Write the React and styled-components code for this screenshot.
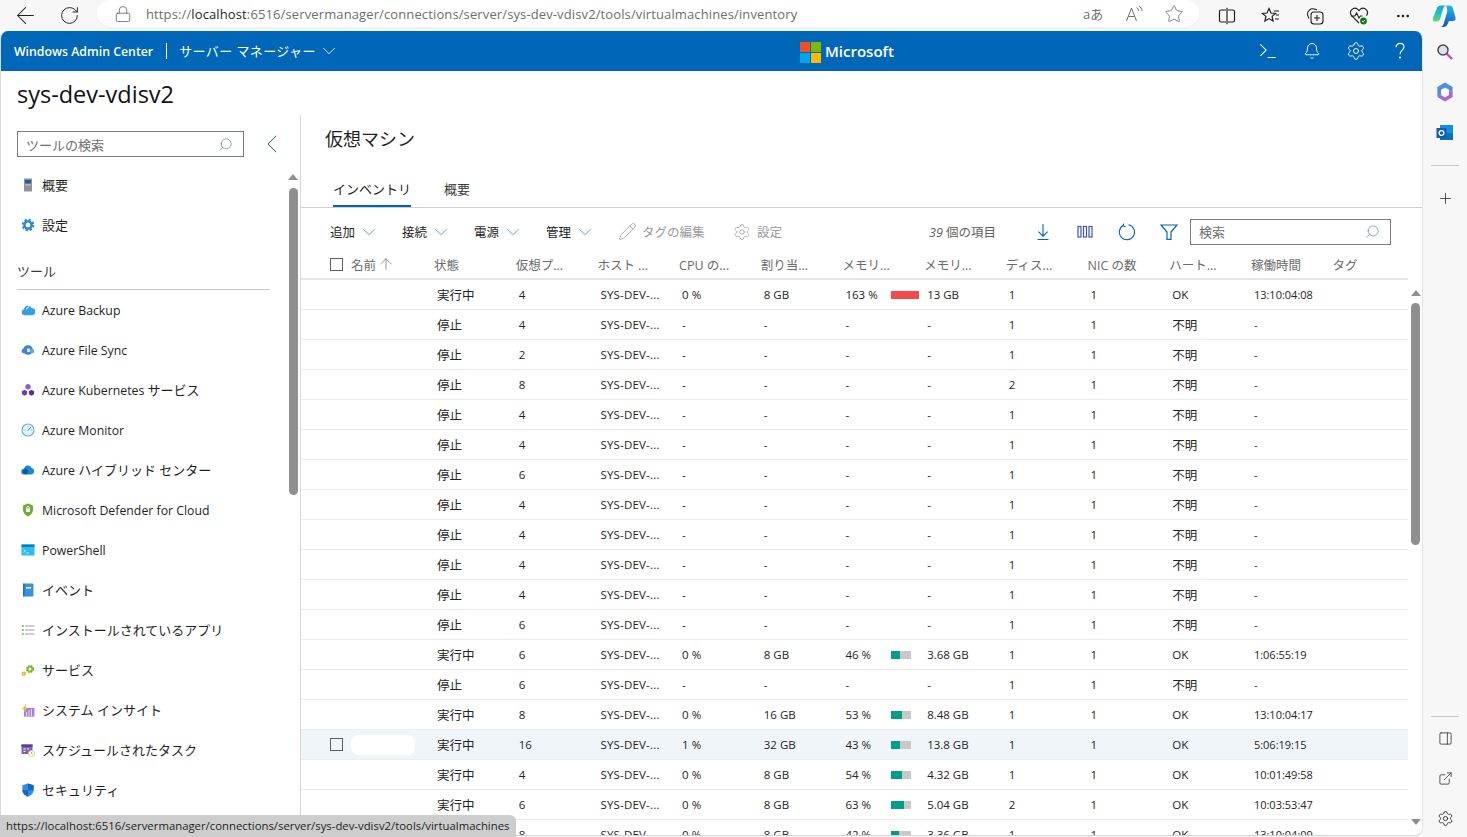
import React from 'react';
import styled, { createGlobalStyle } from 'styled-components';
import {
  ArrowLeft, ArrowUp, Bell, ChevronDown, ChevronLeft, Ellipsis, ExternalLink, Lock,
  PanelRight, Pencil, Plus, RotateCw, Search, Settings, Star, Terminal,
} from 'lucide-react';

const FONT = '"Open Sans", "Noto Sans CJK JP", sans-serif';

const GlobalStyle = createGlobalStyle`
  html, body { margin: 0; padding: 0; height: 100%; }
  body { font-family: ${FONT}; color: #212121; background: #f7f7f7; }
  * { box-sizing: border-box; }
`;

const Window = styled.div`
  position: relative;
  display: flex;
  flex-direction: column;
  height: 100vh;
  overflow: hidden;
  background: #f7f7f7;
`;

/* browser chrome */
const BrowserBar = styled.div`
  display: flex;
  align-items: center;
  height: 31px;
  flex: none;
  padding-left: 14px;
`;

const ChromeButton = styled.span`
  display: flex;
  align-items: center;
  justify-content: center;
  flex: none;
  width: 22px;
  height: 22px;
  margin-right: ${(p) => p.$gap || 0}px;
  color: ${(p) => p.$color || '#1f1f1f'};
  svg { flex: none; }
`;

const AddressBar = styled.div`
  display: flex;
  align-items: center;
  flex: none;
  width: 1102px;
  height: 27px;
  margin: -4px 17px 0 0;
  padding: 0 14px 0 17px;
  background: #fff;
  border-radius: 14px;
  box-shadow: 0 1px 1px rgba(0, 0, 0, 0.05);
`;

const Url = styled.div`
  flex: 1;
  margin-left: 14px;
  font-size: 13px;
  letter-spacing: 0.12px;
  color: #6e6e6e;
  white-space: nowrap;
  b { font-weight: 400; color: #1f1f1f; }
`;

const ReadGlyph = styled.span`
  flex: none;
  width: 40px;
  font-size: 13px;
  color: #6e6e6e;
`;

const Body = styled.div`
  display: flex;
  flex: 1;
  min-height: 0;
`;

const Page = styled.div`
  display: flex;
  flex-direction: column;
  flex: none;
  width: 1423px;
  margin-bottom: 1px;
  background: #fff;
  border-left: 1px solid #d9d9d9;
  border-right: 1px solid #e3e3e3;
  border-bottom: 1px solid #d4d4d4;
  border-radius: 8px 8px 8px 0;
  overflow: hidden;
`;

/* edge sidebar */
const EdgeSide = styled.aside`
  display: flex;
  flex-direction: column;
  align-items: center;
  flex: 1;
  padding-top: 1px;
  margin-bottom: -1px;
`;

const EdgeSlot = styled.span`
  display: flex;
  align-items: center;
  justify-content: center;
  flex: none;
  width: 28px;
  height: ${(p) => p.$h || 40}px;
  color: #262626;
`;

const EdgeRule = styled.div`
  flex: none;
  width: 28px;
  height: 1px;
  margin: ${(p) => p.$m || '12px 0'};
  background: #c8c8c8;
`;

const EdgeSpacer = styled.div`
  flex: 1;
`;

/* app header */
const AppHeader = styled.header`
  display: flex;
  align-items: center;
  position: relative;
  flex: none;
  height: 40px;
  padding-left: 13px;
  background: #0067b8;
  color: #fff;
`;

const Brand = styled.span`
  font-size: 12.3px;
  font-weight: 600;
`;

const HeadDivider = styled.span`
  width: 1px;
  height: 16px;
  margin: 0 12px 0 13px;
  background: #fff;
`;

const ManagerMenu = styled.span`
  display: flex;
  align-items: center;
  gap: 2px;
  padding-bottom: 1px;
  font-size: 13px;
  letter-spacing: 0.4px;
`;

const MsLogo = styled.span`
  position: absolute;
  left: 799px;
  top: 10px;
  display: flex;
  align-items: center;
  gap: 4px;
  font-size: 15px;
  font-weight: 600;
`;

const MsWord = styled.span`
  padding-bottom: 2px;
`;

const LogoGrid = styled.svg`
  width: 21px;
  height: 21px;
`;

const HeadIcons = styled.div`
  display: flex;
  align-items: center;
  margin-left: auto;
`;

const HeadIcon = styled.span`
  display: flex;
  align-items: center;
  justify-content: center;
  width: 44px;
  height: 40px;
`;

const ServerTitle = styled.h1`
  flex: none;
  height: 44px;
  margin: 0;
  padding: 6px 0 0 16px;
  font-size: 23.5px;
  line-height: 34px;
  font-weight: 400;
  color: #111;
`;

const Columns = styled.div`
  display: flex;
  flex: 1;
  min-height: 0;
`;

/* tool sidebar */
const Side = styled.nav`
  display: flex;
  flex-direction: column;
  flex: none;
  width: 300px;
  border-right: 1px solid #d6d6d6;
`;

const SideSearchRow = styled.div`
  display: flex;
  align-items: center;
  flex: none;
  height: 50px;
  padding: 16px 0 8px 16px;
`;

const SearchBox = styled.div`
  display: flex;
  align-items: center;
  justify-content: space-between;
  flex: none;
  width: ${(p) => p.$w}px;
  height: 26px;
  padding: 0 10px 0 8px;
  border: 1px solid #7a7a7a;
  font-size: 13px;
  color: #6e6e6e;
`;

const FlipSearch = styled(Search)`
  transform: scaleX(-1);
  color: #5b7fae;
`;

const Collapse = styled.span`
  display: flex;
  margin-left: 12px;
  color: #0067b8;
`;

const NavArea = styled.div`
  display: flex;
  flex: 1;
  min-height: 0;
`;

const NavList = styled.div`
  flex: none;
  width: 286px;
  overflow: hidden;
`;

const NavItem = styled.div`
  display: flex;
  align-items: center;
  height: 40px;
  padding-left: 20px;
  font-size: 12.3px;
  color: #1f1f1f;
  white-space: nowrap;
`;

const Jp = styled.span`
  display: inline-block;
  padding-bottom: 2px;
  font-size: 13px;
`;

const NavIconSlot = styled.span`
  display: flex;
  align-items: center;
  justify-content: center;
  flex: none;
  width: 14px;
  height: 14px;
  margin-right: 7px;
`;

const NavHeading = styled.div`
  height: 45px;
  margin: 0 17px 0 16px;
  padding-top: 17px;
  font-size: 13px;
  line-height: 18px;
  color: #3a3a3a;
  border-bottom: 1px solid #c8c8c8;
`;

const ScrollRail = styled.div`
  display: flex;
  flex-direction: column;
  align-items: center;
  flex: none;
  width: ${(p) => p.$w || 12}px;
  padding-top: ${(p) => p.$top || 0}px;
`;

const ArrowUpTip = styled.span`
  flex: none;
  width: 0;
  height: 0;
  border-left: 5px solid transparent;
  border-right: 5px solid transparent;
  border-bottom: 6px solid #8f8f8f;
`;

const ArrowDownTip = styled(ArrowUpTip)`
  margin-top: auto;
  margin-bottom: 10px;
  border-bottom: 0;
  border-top: 6px solid #8f8f8f;
`;

const Thumb = styled.span`
  flex: none;
  width: 9px;
  height: ${(p) => p.$h}px;
  margin-top: ${(p) => p.$mt}px;
  background: #8f8f8f;
  border-radius: 5px;
`;

/* main */
const Main = styled.main`
  display: flex;
  flex-direction: column;
  flex: 1;
  min-width: 0;
`;

const PageTitle = styled.h2`
  flex: none;
  height: 50px;
  margin: 0;
  padding: 11px 0 0 24px;
  font-size: 18px;
  line-height: 26px;
  font-weight: 400;
  color: #1f1f1f;
`;

const Tabs = styled.div`
  display: flex;
  flex: none;
  gap: 33px;
  height: 43px;
  padding-left: 32px;
  border-bottom: 1px solid #cfcfcf;
`;

const Tab = styled.span`
  height: 42px;
  padding-top: 15px;
  font-size: 13px;
  line-height: 18px;
  color: ${(p) => (p.$active ? '#1f1f1f' : '#3a3a3a')};
  border-bottom: ${(p) => (p.$active ? '2px solid #0067b8' : '0')};
`;

const Toolbar = styled.div`
  display: flex;
  align-items: center;
  flex: none;
  height: 44px;
  padding: 3px 32px 0 29px;
`;

const MenuButton = styled.span`
  display: flex;
  align-items: center;
  flex: none;
  width: 72px;
  gap: 3px;
  font-size: 12.5px;
  color: #1f1f1f;
  svg { color: #5b7fae; }
`;

const DisabledButton = styled.span`
  display: flex;
  align-items: center;
  flex: none;
  width: ${(p) => p.$w}px;
  gap: ${(p) => p.$gap}px;
  font-size: 12.5px;
  color: #9a9a9a;
`;

const ItemCount = styled.span`
  margin-left: 136px;
  width: 93px;
  flex: none;
  font-size: 12.5px;
  color: #5f5f5f;
  i { font-style: italic; }
`;

const ToolIcon = styled.span`
  display: flex;
  justify-content: center;
  flex: none;
  width: 42px;
  color: #0067b8;
`;

const TableWrap = styled.div`
  display: flex;
  flex: 1;
  min-height: 0;
`;

const Table = styled.div`
  flex: none;
  width: 1107px;
  overflow: hidden;
`;

const RowGrid = styled.div`
  display: grid;
  grid-template-columns: 128px repeat(11, 81.7px) 1fr;
  align-items: center;
`;

const HeadRow = styled(RowGrid)`
  height: 28px;
  padding-bottom: 2px;
  border-bottom: 2px solid #e6e6e6;
`;

const HeadCell = styled.span`
  padding-left: 5px;
  font-size: 12.5px;
  color: #6a6a6a;
  white-space: nowrap;
`;

const NameCell = styled.span`
  display: flex;
  align-items: center;
  padding-left: 29px;
  height: 100%;
  font-size: 12.5px;
  color: #6a6a6a;
  svg { flex: none; margin-left: 1px; }
`;

const CheckBox = styled.span`
  flex: none;
  width: 13px;
  height: 13px;
  margin-right: 8px;
  border: 1px solid #5f5f5f;
`;

const Row = styled(RowGrid)`
  height: 30px;
  border-bottom: 1px solid #ececec;
  background: ${(p) => (p.$hover ? '#f0f5f9' : '#fff')};
`;

const Cell = styled.span`
  padding-left: 8px;
  font-size: ${(p) => (p.$jp ? 12.5 : p.$time ? 11 : 11.5)}px;
  color: #242424;
  white-space: nowrap;
`;

const HostCell = styled(Cell)`
  letter-spacing: 0.2px;
`;

const MemoryCell = styled(Cell)`
  display: grid;
  grid-template-columns: 45.5px auto;
  align-items: center;
`;

const Track = styled.span`
  display: block;
  width: ${(p) => (p.$over ? 28 : 20)}px;
  height: 8px;
  background: #c8c8c8;
`;

const Fill = styled.span`
  display: block;
  height: 100%;
  background: ${(p) => (p.$over ? '#f34b4b' : '#00a088')};
`;

const HiddenName = styled.span`
  width: 64px;
  height: 20px;
  background: #fff;
  border-radius: 8px;
`;

const StatusTip = styled.div`
  position: absolute;
  left: 0;
  bottom: 0;
  width: 516px;
  height: 22px;
  padding: 3px 0 0 6px;
  background: #cdcdcd;
  border-top-right-radius: 6px;
  font-size: 11.35px;
  line-height: 16px;
  color: #1f1f1f;
  white-space: nowrap;
`;

/* coloured drawings */
const Svg = ({ children, size = 14 }) => (
  <svg width={size} height={size} viewBox="0 0 14 14">{children}</svg>
);

const ServerIcon = () => (
  <Svg><rect x="3" y="0.5" width="8" height="13" fill="#8f9499" /><rect x="4" y="2" width="6" height="3.4" fill="#1e5f9e" /><rect x="4" y="6.4" width="6" height="1" fill="#c8c8c8" /></Svg>
);
const GearIcon = () => (
  <Svg>
    <circle cx="7" cy="7" r="4.6" fill="none" stroke="#2b88d8" strokeWidth="3.4" strokeDasharray="2 1.6" />
    <circle cx="7" cy="7" r="3.6" fill="none" stroke="#2b88d8" strokeWidth="2.4" />
  </Svg>
);
const BackupIcon = () => (
  <Svg><path d="M3.4 12.2A3 3 0 0 1 3 6.3 4 4 0 0 1 10.6 5a3.6 3.6 0 0 1 .2 7.2z" fill="#2ea3dd" /><path d="M5 6.2 8.4 3.2" stroke="#fff" strokeWidth="1" /></Svg>
);
const SyncIcon = () => (
  <Svg><circle cx="7" cy="7" r="4.8" fill="#3a86d0" /><circle cx="2.8" cy="8" r="2.2" fill="#3a86d0" /><circle cx="11.2" cy="8" r="2.2" fill="#6fa8d8" /><rect x="6" y="5.5" width="3" height="3.5" fill="#cfe2f3" /></Svg>
);
const KubeIcon = () => (
  <Svg><polygon points="7,0.8 9.6,2.3 9.6,5.3 7,6.8 4.4,5.3 4.4,2.3" fill="#8a5fd0" /><polygon points="3.5,6.8 6.1,8.3 6.1,11.3 3.5,12.8 0.9,11.3 0.9,8.3" fill="#6b3fb5" /><polygon points="10.5,6.8 13.1,8.3 13.1,11.3 10.5,12.8 7.9,11.3 7.9,8.3" fill="#5a2fa0" /></Svg>
);
const MonitorIcon = () => (
  <Svg><circle cx="7" cy="7" r="6" fill="#e6f3fc" stroke="#68b5e8" strokeWidth="1.2" /><path d="M7 7.5 9.8 4.2" stroke="#3d7fc0" strokeWidth="1" /><path d="M3 7h1.5M9.5 7H11M7 3v1" stroke="#7fb8e0" strokeWidth="0.8" /></Svg>
);
const HybridIcon = () => (
  <Svg><path d="M3.2 11.6A2.9 2.9 0 0 1 3 5.8 4 4 0 0 1 10.6 5a3.4 3.4 0 0 1 .2 6.6z" fill="#1f87cf" /><polygon points="4.6,5.8 7,7 7,10.2 4.6,11.4 2.2,10.2 2.2,7" fill="#0b5a94" /></Svg>
);
const DefenderIcon = () => (
  <Svg><path d="M7 .6 12 2.4v4.4c0 3.2-2.2 5.4-5 6.6-2.8-1.2-5-3.4-5-6.6V2.4z" fill="#6fae2e" /><rect x="5" y="5.6" width="4" height="3.4" fill="#fff" /><path d="M5.8 5.8V4.6a1.2 1.2 0 0 1 2.4 0v1.2" fill="none" stroke="#fff" /></Svg>
);
const ShellIcon = () => (
  <Svg><rect x="0.5" y="1.5" width="13" height="11" fill="#2cbcf0" /><rect x="0.5" y="1.5" width="13" height="2.4" fill="#0f78b8" /><path d="M2.5 6.5 4.5 8 2.5 9.5M5 10h3" stroke="#fff" strokeWidth="0.7" fill="none" /></Svg>
);
const EventIcon = () => (
  <Svg><rect x="2" y="0.6" width="10.5" height="12.8" rx="1" fill="#3a8fe0" /><rect x="2" y="0.6" width="1.6" height="12.8" fill="#1f6fc0" /><rect x="5" y="4" width="5" height="1.5" fill="#fff" /></Svg>
);
const AppsIcon = () => (
  <Svg><path d="M0.8 3h2M0.8 7h2M0.8 11h2" stroke="#6fae2e" strokeWidth="1.4" /><path d="M4 3h9.4M4 7h9.4M4 11h9.4" stroke="#9a9a9a" strokeWidth="1.2" /></Svg>
);
const ServiceIcon = () => (
  <Svg>
    <circle cx="9" cy="6" r="2.9" fill="none" stroke="#7ab82e" strokeWidth="2.4" strokeDasharray="1.6 .7" />
    <circle cx="9" cy="6" r="2.4" fill="none" stroke="#7ab82e" strokeWidth="1.4" />
    <circle cx="2.8" cy="10.6" r="1.5" fill="#fff" stroke="#f5a81c" strokeWidth="1.4" />
  </Svg>
);
const InsightIcon = () => (
  <Svg><rect x="3" y="5" width="10.4" height="8.6" fill="#a57de0" /><path d="M5.5 13V9M8 13V7M10.5 13V6" stroke="#e6dcf6" strokeWidth="1" /><polygon points="5.2,0.4 1,6.6 3.6,6.6 2.6,10 6.6,4.4 4.2,4.4" fill="#f5b71c" /></Svg>
);
const TaskIcon = () => (
  <Svg><rect x="0.5" y="1.5" width="11" height="9.5" fill="#7b63b8" /><rect x="0.5" y="1.5" width="11" height="2.4" fill="#54408f" /><path d="M2.5 6h2M6 6h2M2.5 8.4h2" stroke="#fff" /><circle cx="10.5" cy="10.5" r="3" fill="#fff" stroke="#e8c46a" /><path d="M10.5 9v1.7h1.2" stroke="#b08a2e" strokeWidth="0.7" fill="none" /></Svg>
);
const ShieldIcon = () => (
  <Svg><path d="M7 .4 12.6 2.2v5c0 3-2.6 5.2-5.6 6.4C4 12.4 1.4 10.2 1.4 7.2v-5z" fill="#2f8fe6" /><path d="M7 .4 12.6 2.2v5H7zM7 7.2v6.4C4 12.4 1.4 10.2 1.4 7.2z" fill="#1168c4" /></Svg>
);

const HelpGlyph = () => (
  <svg width="18" height="18" viewBox="0 0 18 18" fill="none" stroke="#fff" strokeWidth="1.1">
    <path d="M5 5.2C5 3 6.8 1.4 9 1.4s4 1.5 4 3.6c0 3-4 3.4-4 7.2" />
    <circle cx="9" cy="15.6" r=".5" fill="#fff" />
  </svg>
);

const DownloadGlyph = () => (
  <svg width="16" height="18" viewBox="0 0 16 18" fill="none" stroke="currentColor" strokeWidth="1.1">
    <path d="M8 1v12M3.4 8.6 8 13.2l4.6-4.6M2.5 16.5h11" />
  </svg>
);

const ColumnsGlyph = () => (
  <svg width="16" height="14" viewBox="0 0 16 14" fill="none" stroke="#3f55c0" strokeWidth="1.2">
    <rect x="1" y="1.5" width="3" height="10.5" /><rect x="6.5" y="1.5" width="3" height="10.5" /><rect x="12" y="1.5" width="3" height="10.5" />
  </svg>
);

const RefreshGlyph = () => (
  <svg width="18" height="18" viewBox="0 0 18 18" fill="none" stroke="currentColor" strokeWidth="1.1">
    <path d="M10.5 1.7A7.6 7.6 0 1 1 5.2 2.5" />
    <path d="M5.6.6 5.2 3l2.4.8" />
  </svg>
);

const FunnelGlyph = () => (
  <svg width="18" height="18" viewBox="0 0 18 18" fill="none" stroke="currentColor" strokeWidth="1.2">
    <path d="M1 2h16l-6 7v7.4H7V9z" />
  </svg>
);

const CopilotMark = () => (
  <svg width="24" height="24" viewBox="0 0 24 24">
    <defs>
      <linearGradient id="copA" x1="0.4" y1="0" x2="0.4" y2="1">
        <stop offset="0" stopColor="#1f9fe0" />
        <stop offset="0.55" stopColor="#24c8b0" />
        <stop offset="1" stopColor="#6fd66a" />
      </linearGradient>
      <linearGradient id="copB" x1="0.6" y1="0" x2="0.4" y2="1">
        <stop offset="0" stopColor="#18c0d8" />
        <stop offset="0.5" stopColor="#1f7fe0" />
        <stop offset="1" stopColor="#1a4fc8" />
      </linearGradient>
    </defs>
    <path d="M9 1.5h5c-1.5.5-2.5 1.5-3 3.5L8.5 14c-.5 2-2 3.5-4 3.5H3C1 17.5.3 16 1 14L5 4C5.6 2.4 7 1.5 9 1.5z" fill="url(#copA)" />
    <path d="M14 1.5h3.5c2 0 3 1 3.5 3l2.5 9c.5 2-.5 3.5-2.5 3.5H17l-1.6 3.5c-.8 1.6-2 2.5-3.9 2.5H8c2 0 3-1.2 3.6-3L15 8.5c.5-1.5.2-5.5-1-7z" fill="url(#copB)" />
  </svg>
);
const SplitMark = () => (
  <svg width="18" height="18" viewBox="0 0 18 18" fill="none" stroke="#1f1f1f" strokeWidth="1.2">
    <path d="M8 3H3a1.5 1.5 0 0 0-1.5 1.5v9A1.5 1.5 0 0 0 3 15h5M10 3h5a1.5 1.5 0 0 1 1.5 1.5v9A1.5 1.5 0 0 1 15 15h-5M9 .8v16.4" />
  </svg>
);
const CollectionsMark = () => (
  <svg width="18" height="18" viewBox="0 0 18 18" fill="none" stroke="#1f1f1f" strokeWidth="1.1">
    <path d="M3 11.5C1.8 9.5 1 7.5 1.8 5L4 2.6c.8-.8 2-1 3-.8l4 1" />
    <rect x="5" y="5" width="12" height="12" rx="3" />
    <path d="M11 8v6M8 11h6" />
  </svg>
);
const M365Mark = () => (
  <svg width="18" height="20" viewBox="0 0 18 20">
    <path d="M9 .6 16.6 5v5l-4-2.4L9 5.4 5 7.8V13L1.4 15V5z" fill="#4a8fe0" />
    <path d="M16.6 10v5L9 19.4 1.4 15 5 13l4 2.4 4-2.4V8z" fill="#a468d8" />
    <circle cx="9" cy="10" r="3" fill="#fff" />
  </svg>
);
const OutlookMark = () => (
  <svg width="18" height="18" viewBox="0 0 18 18">
    <rect x="4" y="1" width="13" height="15" fill="#1490df" />
    <path d="M4 9h13v7H4z" fill="#0a6fc2" />
    <rect x="0.5" y="4" width="10" height="10" fill="#0f5fb0" />
    <circle cx="5.5" cy="9" r="2.4" fill="none" stroke="#fff" strokeWidth="1.3" />
  </svg>
);
const ZoomMark = () => (
  <svg width="18" height="18" viewBox="0 0 18 18">
    <path d="M10.5 10.5 16 16" stroke="#d040c8" strokeWidth="2.4" />
    <circle cx="7" cy="7" r="5" fill="#dbe4ee" stroke="#4a4a4a" strokeWidth="1.5" />
  </svg>
);
const HealthMark = () => (
  <svg width="22" height="22" viewBox="0 0 22 22" fill="none" stroke="#1f1f1f" strokeWidth="1.1">
    <path d="M11 18 3.6 10.6a4.4 4.4 0 0 1 6.2-6.2L11 5.6l1.2-1.2a4.4 4.4 0 0 1 6.2 6.2" />
    <path d="M3 11h4l1.6-3 2.4 5 1.4-2h2" />
    <circle cx="15.5" cy="16" r="3.4" fill="#107c10" stroke="none" />
    <path d="M14 16l1.1 1.1 2-2.2" stroke="#fff" strokeWidth="0.9" />
  </svg>
);
const FavMark = () => (
  <svg width="20" height="20" viewBox="0 0 20 20" fill="none" stroke="#1f1f1f" strokeWidth="1.2">
    <path d="M8 2.5 10 7l4.6.4-3.5 3 1 4.6L8 12.6 3.9 15l1-4.6-3.5-3L6 7z" />
    <path d="M13 5h5M15 9h3M14 13h4" />
  </svg>
);
const ReadAloud = () => (
  <svg width="20" height="20" viewBox="0 0 20 20" fill="none" stroke="#6e6e6e" strokeWidth="1">
    <path d="M2.5 17 7.5 4l5 13M4.4 12.5h6.2" />
    <path d="M12.5 3.5c1.4.8 2 2 2 3.2M15 2c2 1 3 3 3 5" />
  </svg>
);

const NAV_TOP = [
  [<Jp>概要</Jp>, ServerIcon],
  [<Jp>設定</Jp>, GearIcon],
];

const NAV_TOOLS = [
  ['Azure Backup', BackupIcon],
  ['Azure File Sync', SyncIcon],
  [<>Azure Kubernetes <Jp>サービス</Jp></>, KubeIcon],
  ['Azure Monitor', MonitorIcon],
  [<>Azure <Jp>ハイブリッド センター</Jp></>, HybridIcon],
  ['Microsoft Defender for Cloud', DefenderIcon],
  ['PowerShell', ShellIcon],
  [<Jp>イベント</Jp>, EventIcon],
  [<Jp>インストールされているアプリ</Jp>, AppsIcon],
  [<Jp>サービス</Jp>, ServiceIcon],
  [<Jp>システム インサイト</Jp>, InsightIcon],
  [<Jp>スケジュールされたタスク</Jp>, TaskIcon],
  [<Jp>セキュリティ</Jp>, ShieldIcon],
];

const HEADS = ['状態', '仮想プ...', 'ホスト ...', 'CPU の...', '割り当...', 'メモリ...', 'メモリ...', 'ディス...', 'NIC の数', 'ハート...', '稼働時間', 'タグ'];

const stopped = (procs, disks = 1) => ({ state: '停止', procs, disks });
const running = (procs, cpu, mem, pct, used, up, disks = 1) => ({ state: '実行中', procs, cpu, mem, pct, used, up, disks });

const ROWS = [
  running(4, '0 %', '8 GB', 163, '13 GB', '13:10:04:08'),
  stopped(4), stopped(2), stopped(8, 2), stopped(4), stopped(4), stopped(6),
  stopped(4), stopped(4), stopped(4), stopped(4), stopped(6),
  running(6, '0 %', '8 GB', 46, '3.68 GB', '1:06:55:19'),
  stopped(6),
  running(8, '0 %', '16 GB', 53, '8.48 GB', '13:10:04:17'),
  { ...running(16, '1 %', '32 GB', 43, '13.8 GB', '5:06:19:15'), hover: true },
  running(4, '0 %', '8 GB', 54, '4.32 GB', '10:01:49:58'),
  running(6, '0 %', '8 GB', 63, '5.04 GB', '10:03:53:47', 2),
  running(8, '0 %', '8 GB', 42, '3.36 GB', '13:10:04:09'),
];

const VmRow = ({ vm }) => {
  const on = vm.state === '実行中';
  return (
    <Row $hover={vm.hover}>
      <NameCell>
        {vm.hover && <CheckBox />}
        {vm.hover && <HiddenName />}
      </NameCell>
      <Cell $jp>{vm.state}</Cell>
      <Cell>{vm.procs}</Cell>
      <HostCell>SYS-DEV-...</HostCell>
      <Cell>{on ? vm.cpu : '-'}</Cell>
      <Cell>{on ? vm.mem : '-'}</Cell>
      {on ? (
        <MemoryCell>
          {vm.pct} %
          <Track $over={vm.pct > 100}>
            <Fill $over={vm.pct > 100} style={{ width: `${Math.min(vm.pct, 100)}%` }} />
          </Track>
        </MemoryCell>
      ) : <Cell>-</Cell>}
      <Cell>{on ? vm.used : '-'}</Cell>
      <Cell>{vm.disks}</Cell>
      <Cell>1</Cell>
      <Cell $jp={!on}>{on ? 'OK' : '不明'}</Cell>
      <Cell $time>{on ? vm.up : '-'}</Cell>
      <Cell />
    </Row>
  );
};

const NavEntry = ({ label, Icon }) => (
  <NavItem>
    <NavIconSlot><Icon /></NavIconSlot>
    <span>{label}</span>
  </NavItem>
);

export default function App() {
  return (
    <Window>
      <GlobalStyle />
      <BrowserBar>
        <ChromeButton $gap={22}><ArrowLeft size={27} strokeWidth={0.9} /></ChromeButton>
        <ChromeButton $gap={17}><RotateCw size={21} strokeWidth={1.1} /></ChromeButton>
        <AddressBar>
          <Lock size={18} strokeWidth={1} color="#555" />
          <Url>https://<b>localhost</b>:6516/servermanager/connections/server/sys-dev-vdisv2/tools/virtualmachines/inventory</Url>
          <ReadGlyph>aあ</ReadGlyph>
          <ChromeButton $gap={18}><ReadAloud /></ChromeButton>
          <ChromeButton $color="#6e6e6e"><Star size={20} strokeWidth={1} /></ChromeButton>
        </AddressBar>
        <ChromeButton $gap={22}><SplitMark /></ChromeButton>
        <ChromeButton $gap={22}><FavMark /></ChromeButton>
        <ChromeButton $gap={22}><CollectionsMark /></ChromeButton>
        <ChromeButton $gap={22}><HealthMark /></ChromeButton>
        <ChromeButton $gap={19}><Ellipsis size={16} /></ChromeButton>
        <ChromeButton><CopilotMark /></ChromeButton>
      </BrowserBar>
      <Body>
        <Page>
          <AppHeader>
            <Brand>Windows Admin Center</Brand>
            <HeadDivider />
            <ManagerMenu>サーバー マネージャー <ChevronDown size={22} strokeWidth={0.9} /></ManagerMenu>
            <MsLogo>
              <LogoGrid viewBox="0 0 21 21">
                <rect width="10" height="10" fill="#f25022" />
                <rect x="11" width="10" height="10" fill="#7fba00" />
                <rect y="11" width="10" height="10" fill="#00a4ef" />
                <rect x="11" y="11" width="10" height="10" fill="#ffb900" />
              </LogoGrid>
              <MsWord>Microsoft</MsWord>
            </MsLogo>
            <HeadIcons>
              <HeadIcon><Terminal size={22} strokeWidth={1.1} /></HeadIcon>
              <HeadIcon><Bell size={18} strokeWidth={1.2} /></HeadIcon>
              <HeadIcon><Settings size={20} strokeWidth={1.1} /></HeadIcon>
              <HeadIcon><HelpGlyph /></HeadIcon>
            </HeadIcons>
          </AppHeader>
          <ServerTitle>sys-dev-vdisv2</ServerTitle>
          <Columns>
            <Side>
              <SideSearchRow>
                <SearchBox $w={227}>ツールの検索 <FlipSearch size={15} strokeWidth={1.1} /></SearchBox>
                <Collapse><ChevronLeft size={32} strokeWidth={0.7} /></Collapse>
              </SideSearchRow>
              <NavArea>
                <NavList>
                  {NAV_TOP.map(([label, Icon], i) => <NavEntry key={i} label={label} Icon={Icon} />)}
                  <NavHeading>ツール</NavHeading>
                  {NAV_TOOLS.map(([label, Icon], i) => <NavEntry key={i} label={label} Icon={Icon} />)}
                </NavList>
                <ScrollRail $top={9}>
                  <ArrowUpTip />
                  <Thumb $h={307} $mt={8} />
                </ScrollRail>
              </NavArea>
            </Side>
            <Main>
              <PageTitle>仮想マシン</PageTitle>
              <Tabs>
                <Tab $active>インベントリ</Tab>
                <Tab>概要</Tab>
              </Tabs>
              <Toolbar>
                <MenuButton>追加 <ChevronDown size={22} strokeWidth={0.9} /></MenuButton>
                <MenuButton>接続 <ChevronDown size={22} strokeWidth={0.9} /></MenuButton>
                <MenuButton>電源 <ChevronDown size={22} strokeWidth={0.9} /></MenuButton>
                <MenuButton>管理 <ChevronDown size={22} strokeWidth={0.9} /></MenuButton>
                <DisabledButton $w={115} $gap={5}><Pencil size={19} strokeWidth={1} /> タグの編集</DisabledButton>
                <DisabledButton $w={60} $gap={6}><Settings size={18} strokeWidth={1} /> 設定</DisabledButton>
                <ItemCount><i>39</i> 個の項目</ItemCount>
                <ToolIcon><DownloadGlyph /></ToolIcon>
                <ToolIcon><ColumnsGlyph /></ToolIcon>
                <ToolIcon><RefreshGlyph /></ToolIcon>
                <ToolIcon><FunnelGlyph /></ToolIcon>
                <SearchBox $w={201}>検索 <FlipSearch size={15} strokeWidth={1.1} /></SearchBox>
              </Toolbar>
              <TableWrap>
                <Table>
                  <HeadRow>
                    <NameCell>
                      <CheckBox />
                      名前
                      <ArrowUp size={18} strokeWidth={0.9} />
                    </NameCell>
                    {HEADS.map((h, i) => <HeadCell key={i}>{h}</HeadCell>)}
                  </HeadRow>
                  {ROWS.map((vm, i) => <VmRow key={i} vm={vm} />)}
                </Table>
                <ScrollRail $top={38} $w={15}>
                  <ArrowUpTip />
                  <Thumb $h={242} $mt={7} />
                  <ArrowDownTip />
                </ScrollRail>
              </TableWrap>
            </Main>
          </Columns>
        </Page>
        <EdgeSide>
          <EdgeSlot><ZoomMark /></EdgeSlot>
          <EdgeSlot><M365Mark /></EdgeSlot>
          <EdgeSlot $h={41}><OutlookMark /></EdgeSlot>
          <EdgeRule />
          <EdgeSlot><Plus size={17} strokeWidth={1.1} /></EdgeSlot>
          <EdgeSpacer />
          <EdgeRule $m="0 0 1px" />
          <EdgeSlot><PanelRight size={15} strokeWidth={1.2} /></EdgeSlot>
          <EdgeSlot><ExternalLink size={15} strokeWidth={1.2} /></EdgeSlot>
          <EdgeSlot><Settings size={17} strokeWidth={1.2} /></EdgeSlot>
        </EdgeSide>
      </Body>
      <StatusTip>https://localhost:6516/servermanager/connections/server/sys-dev-vdisv2/tools/virtualmachines</StatusTip>
    </Window>
  );
}
